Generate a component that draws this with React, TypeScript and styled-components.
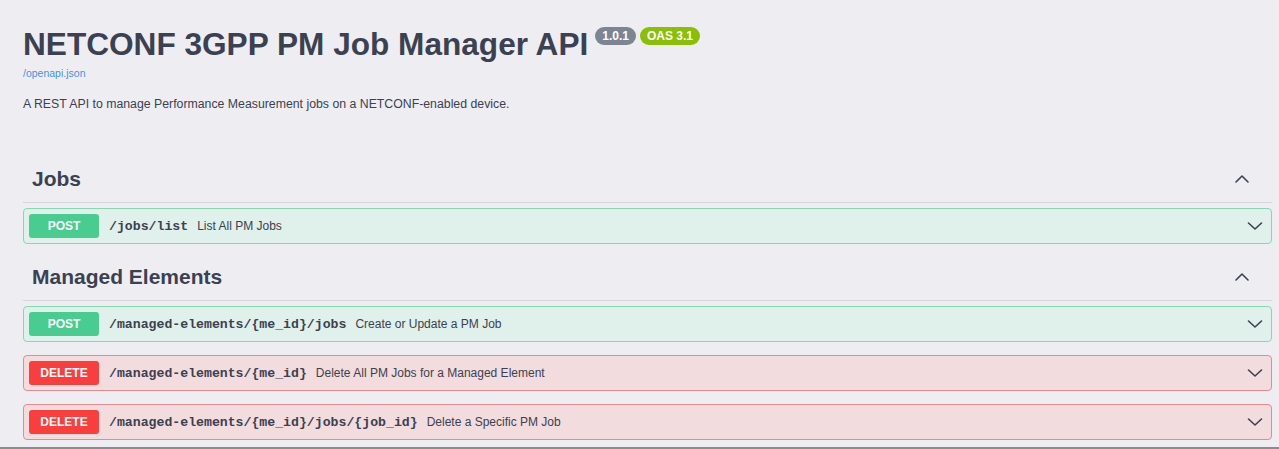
import React, { FC } from 'react';
import styled, { createGlobalStyle } from 'styled-components';

type Method = 'post' | 'delete';

interface Operation {
  method: Method;
  path: string;
  summary: string;
}

interface Tag {
  name: string;
  operations: Operation[];
}

const tags: Tag[] = [
  {
    name: 'Jobs',
    operations: [{ method: 'post', path: '/jobs/list', summary: 'List All PM Jobs' }],
  },
  {
    name: 'Managed Elements',
    operations: [
      { method: 'post', path: '/managed-elements/{me_id}/jobs', summary: 'Create or Update a PM Job' },
      { method: 'delete', path: '/managed-elements/{me_id}', summary: 'Delete All PM Jobs for a Managed Element' },
      { method: 'delete', path: '/managed-elements/{me_id}/jobs/{job_id}', summary: 'Delete a Specific PM Job' },
    ],
  },
];

const palette = {
  post: { badge: '#49cc90', border: '#86d8b0', bg: '#e0f0ea' },
  delete: { badge: '#f93e3e', border: '#e58a8e', bg: '#f2dcde' },
};

const GlobalStyle = createGlobalStyle`
  html, body {
    margin: 0;
    padding: 0;
    background: #eeeef2;
  }

  body {
    font-family: 'Liberation Sans', Arial, sans-serif;
    color: #3b4151;
  }
`;

const Page = styled.div`
  box-sizing: border-box;
  height: 449px;
  overflow: hidden;
  padding: 24px 7px 0 23px;
  border-bottom: 2px solid #8c8c8c;
  background: #eeeef2;
`;

const Info = styled.div`
  display: flex;
  flex-direction: column;
  margin-bottom: 43px;
`;

const TitleRow = styled.div`
  display: flex;
  align-items: flex-start;
  gap: 7px;
`;

const Title = styled.h2`
  margin: 0;
  font-size: 31.6px;
  line-height: 41px;
  font-weight: 700;
  color: #3b4151;
`;

const Badges = styled.div`
  display: flex;
  gap: 4px;
  margin-top: 3px;
`;

const Badge = styled.span<{ $color: string }>`
  display: inline-flex;
  align-items: center;
  height: 18px;
  padding: 0 7px;
  border-radius: 9px;
  background: ${(p) => p.$color};
  color: #fff;
  font-size: 12px;
  font-weight: 700;
`;

const SpecLink = styled.a`
  margin-top: 1px;
  font-size: 10.5px;
  line-height: 14px;
  color: #4990e2;
  text-decoration: none;
`;

const Description = styled.p`
  margin: 15px 0 0;
  font-size: 12.3px;
  line-height: 18px;
  color: #3b4151;
`;

const TagSection = styled.section`
  display: flex;
  flex-direction: column;

  & + & {
    margin-top: 2px;
  }
`;

const TagHeader = styled.div`
  display: flex;
  align-items: center;
  justify-content: space-between;
  height: 46px;
  padding: 0 22px 0 9px;
  border-bottom: 1px solid #d6d7dd;

  h3 {
    margin: 0;
    font-size: 21px;
    font-weight: 700;
    color: #3b4151;
  }
`;

const OpBlock = styled.div<{ $method: Method }>`
  box-sizing: border-box;
  display: flex;
  align-items: center;
  height: 36px;
  margin: 5px 0 8px;
  padding: 0 8px 0 5px;
  border: 1px solid ${(p) => palette[p.$method].border};
  border-radius: 4px;
  background: ${(p) => palette[p.$method].bg};

  & + & {
    margin-top: 5px;
  }
`;

const MethodBadge = styled.span<{ $method: Method }>`
  display: inline-flex;
  align-items: center;
  justify-content: center;
  width: 70px;
  height: 24px;
  border-radius: 3px;
  background: ${(p) => palette[p.$method].badge};
  color: #fff;
  font-size: 12px;
  font-weight: 700;
  text-transform: uppercase;
`;

const Path = styled.span`
  margin-left: 10px;
  font-family: 'Liberation Mono', 'Courier New', monospace;
  font-size: 13.2px;
  font-weight: 700;
  color: #3b4151;
`;

const Summary = styled.span`
  flex: 1;
  margin-left: 9px;
  font-size: 12px;
  color: #3b4151;
`;

const Chevron: FC<{ up?: boolean }> = ({ up }) => (
  <svg width="16" height="16" viewBox="0 0 16 16" fill="none">
    <polyline
      points={up ? '2,11 8,5 14,11' : '1.5,5 8,11 14.5,5'}
      stroke="#3b4151"
      strokeWidth="1.6"
      strokeLinecap="round"
      strokeLinejoin="round"
    />
  </svg>
);

const App: FC = () => (
  <>
    <GlobalStyle />
    <Page>
      <Info>
        <TitleRow>
          <Title>NETCONF 3GPP PM Job Manager API</Title>
          <Badges>
            <Badge $color="#7d8492">1.0.1</Badge>
            <Badge $color="#89bf04">OAS 3.1</Badge>
          </Badges>
        </TitleRow>
        <SpecLink href="#">/openapi.json</SpecLink>
        <Description>
          A REST API to manage Performance Measurement jobs on a NETCONF-enabled device.
        </Description>
      </Info>

      {tags.map((tag) => (
        <TagSection key={tag.name}>
          <TagHeader>
            <h3>{tag.name}</h3>
            <Chevron up />
          </TagHeader>
          {tag.operations.map((op) => (
            <OpBlock key={op.method + op.path} $method={op.method}>
              <MethodBadge $method={op.method}>{op.method}</MethodBadge>
              <Path>{op.path}</Path>
              <Summary>{op.summary}</Summary>
              <Chevron />
            </OpBlock>
          ))}
        </TagSection>
      ))}
    </Page>
  </>
);

export default App;
